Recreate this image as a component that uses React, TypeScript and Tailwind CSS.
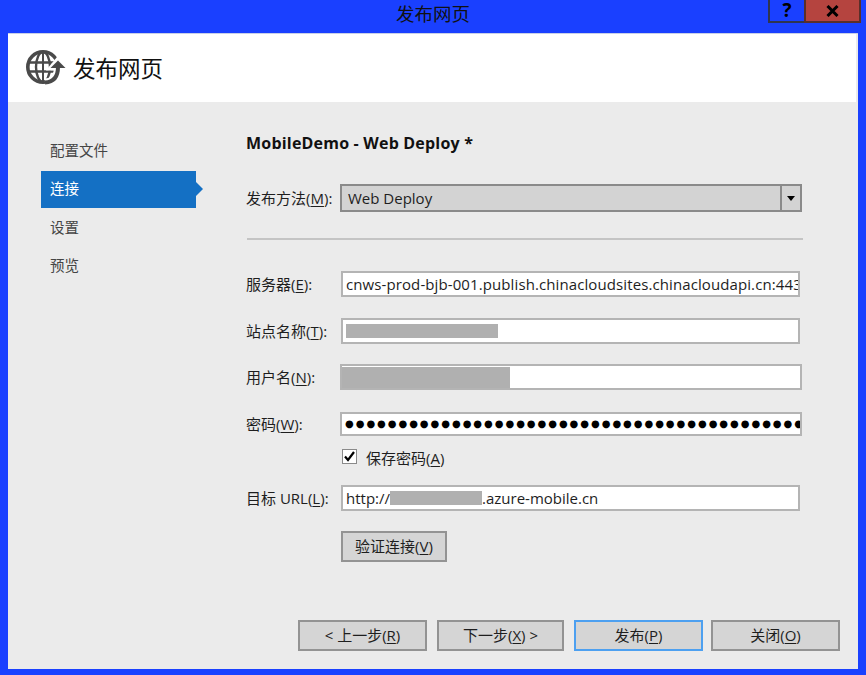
import React from 'react';

const FONT = "font-['Open_Sans','Noto_Sans_CJK_SC',sans-serif]";

// label with underlined access key, e.g. 发布方法(M):
const Label: React.FC<{ text: string; hotkey: string; className?: string }> = ({ text, hotkey, className }) => (
  <span className={`shrink-0 whitespace-nowrap text-[15px] leading-[20px] text-[#1e1e1e] ${className ?? 'w-[94px]'}`}>
    {text}(<span className="underline underline-offset-2">{hotkey}</span>):
  </span>
);

const Field: React.FC<{ className?: string; children?: React.ReactNode }> = ({ className, children }) => (
  <div className={`flex items-center overflow-hidden border-2 border-[#b4b4b4] bg-white text-[15px] text-[#1e1e1e] ${className ?? ''}`}>
    {children}
  </div>
);

const Redact: React.FC<{ className: string }> = ({ className }) => <div className={`shrink-0 bg-[#b0b0b0] ${className}`} />;

const Btn: React.FC<{ className?: string; children: React.ReactNode }> = ({ className, children }) => (
  <button className={`flex h-[31px] items-center justify-center border-2 bg-[#d5d5d5] text-[15px] text-[#1e1e1e] ${className ?? 'border-[#939393]'}`}>
    {children}
  </button>
);

const Key: React.FC<{ k: string }> = ({ k }) => <span className="underline underline-offset-2">{k}</span>;

const GlobeIcon = () => (
  <svg width="40" height="36" viewBox="0 0 40 36" fill="none">
    <circle cx="17" cy="17" r="15.2" stroke="#4a4a4a" strokeWidth="3.6" fill="#fff" />
    <ellipse cx="17" cy="17" rx="7" ry="15" stroke="#4a4a4a" strokeWidth="2.4" />
    <path d="M2 12.5H32M2 21.5H32" stroke="#4a4a4a" strokeWidth="2.4" />
    <path d="M17 2V32" stroke="#4a4a4a" strokeWidth="2" />
    {/* arrow wrapped round the globe, with a white halo */}
    <path d="M19 32.5C27 32 32 27 32 17" stroke="#fff" strokeWidth="8" />
    <path d="M32 8L41 19H23Z" fill="#fff" stroke="#fff" strokeWidth="3" />
    <path d="M19 32.5C27 32 32 27 32 17" stroke="#4a4a4a" strokeWidth="4" />
    <path d="M32 10.5L39.5 18H24.5Z" fill="#4a4a4a" />
  </svg>
);

const App: React.FC = () => {
  const nav = ['配置文件', '连接', '设置', '预览'];
  return (
    <div className={`flex h-[675px] w-[866px] flex-col overflow-hidden bg-[#1a40ff] ${FONT}`}>
      {/* title bar */}
      <div className="grid h-[33px] shrink-0 grid-cols-[1fr_auto_1fr] items-start">
        <div />
        <div className="pt-[2px] text-[18.5px] leading-[24px] text-[#111]">发布网页</div>
        <div className="flex justify-end pr-[5px]">
          <div className="flex h-[23px] w-[36px] items-center justify-center border-b-2 border-l-2 border-[#2f3550] bg-[#1a40ff] text-[19px] font-bold leading-[19px] text-black">?</div>
          <div className="flex h-[23px] w-[57px] items-center justify-center border-x-2 border-b-2 border-[#5a2f2a] bg-[#b5443f]">
            <svg width="13" height="12" viewBox="0 0 13 12"><path d="M1.5 1L11.5 11M11.5 1L1.5 11" stroke="#000" strokeWidth="3" /></svg>
          </div>
        </div>
      </div>

      {/* client area */}
      <div className="mx-[8px] mb-[6px] flex min-h-0 flex-1 flex-col border-t border-[#c8d0e8] bg-[#ebebeb]">
        <div className="mr-[2px] flex h-[68px] shrink-0 items-center gap-[7px] bg-white pl-[18px]">
          <GlobeIcon />
          <span className="mt-[1px] text-[22.5px] leading-[30px] text-[#111]">发布网页</span>
        </div>

        <div className="flex min-h-0 flex-1">
          {/* sidebar */}
          <div className="w-[238px] shrink-0 pl-[33px] pt-[30px]">
            {nav.map((item) => (
              <div
                key={item}
                className={`relative mb-[1.5px] flex h-[37px] w-[155px] items-center pl-[9px] text-[14.5px] ${item === '连接' ? 'bg-[#1470c4] text-white' : 'text-[#444]'}`}
              >
                {item}
                {item === '连接' && (
                  <span className="absolute left-full top-1/2 -translate-y-1/2 border-y-[7px] border-l-[7px] border-y-transparent border-l-[#1470c4]" />
                )}
              </div>
            ))}
          </div>

          {/* form */}
          <div className="flex min-w-0 flex-1 flex-col">
            <div className="pt-[31px] text-[16px] font-bold leading-[20px] tracking-[0.2px] text-[#111]">MobileDemo - Web Deploy *</div>

            <div className="mt-[31px] flex items-center">
              <Label text="发布方法" hotkey="M" />
              <div className="flex h-[28px] w-[462px] items-center border-2 border-[#8a8a8a] bg-[#d3d3d3] text-[15px] text-[#1e1e1e]">
                <span className="flex-1 pl-[6px]">Web Deploy</span>
                <span className="flex h-full w-[20px] items-center justify-center border-l-2 border-[#8a8a8a]">
                  <span className="border-x-[4px] border-t-[5px] border-x-transparent border-t-black" />
                </span>
              </div>
            </div>

            <div className="ml-[1px] mt-[26px] h-[2px] w-[556px] bg-[#c4c4c4]" />

            <div className="mt-[31px] flex items-center">
              <Label text="服务器" hotkey="E" className="w-[95px]" />
              <Field className="h-[26px] w-[459px] pl-[3px]"><span className="whitespace-nowrap tracking-[0.1px]">cnws-prod-bjb-001.publish.chinacloudsites.chinacloudapi.cn:443</span></Field>
            </div>

            <div className="mt-[21px] flex items-center">
              <Label text="站点名称" hotkey="T" className="w-[95px]" />
              <Field className="h-[26px] w-[459px] pl-[3px]"><Redact className="h-[14px] w-[152px]" /></Field>
            </div>

            <div className="mt-[20px] flex items-center">
              <Label text="用户名" hotkey="N" />
              <Field className="h-[26px] w-[462px]"><Redact className="h-[21px] w-[168px]" /></Field>
            </div>

            <div className="mt-[22px] flex items-center">
              <Label text="密码" hotkey="W" />
              <Field className="h-[24px] w-[462px] pl-[3px]">
                <span className="whitespace-nowrap font-['DejaVu_Sans',sans-serif] text-[10px] leading-none tracking-[1.97px] text-black">{'●'.repeat(47)}</span>
              </Field>
            </div>

            <div className="ml-[96px] mt-[12px] flex items-center gap-[9px]">
              <div className="-mt-[3px] flex h-[15px] w-[15px] items-center justify-center border border-[#8a8a8a] bg-white">
                <svg width="11" height="11" viewBox="0 0 11 11" fill="none"><path d="M1 5.5L4 9L10 1" stroke="#000" strokeWidth="2.2" /></svg>
              </div>
              <span className="text-[15px] leading-[20px] text-[#1e1e1e]">保存密码(<Key k="A" />)</span>
            </div>

            <div className="mt-[17px] flex items-center">
              <Label text="目标 URL" hotkey="L" className="w-[95px]" />
              <Field className="h-[26px] w-[459px] pl-[3px]">
                <span>http://</span>
                <Redact className="h-[14px] w-[92px]" />
                <span>.azure-mobile.cn</span>
              </Field>
            </div>

            <Btn className="ml-[95px] mt-[20px] w-[106px] border-[#939393]"><span>验证连接(<Key k="V" />)</span></Btn>

            <div className="ml-[52px] mt-[58px] flex gap-[10px]">
              <Btn className="w-[129px] border-[#939393]"><span>&lt; 上一步(<Key k="R" />)</span></Btn>
              <Btn className="w-[127px] border-[#939393]"><span>下一步(<Key k="X" />) &gt;</span></Btn>
              <Btn className="w-[129px] border-[#4da0f0]"><span>发布(<Key k="P" />)</span></Btn>
              <Btn className="-ml-[2px] w-[129px] border-[#939393]"><span>关闭(<Key k="O" />)</span></Btn>
            </div>
          </div>
        </div>
      </div>
    </div>
  );
};

export default App;
